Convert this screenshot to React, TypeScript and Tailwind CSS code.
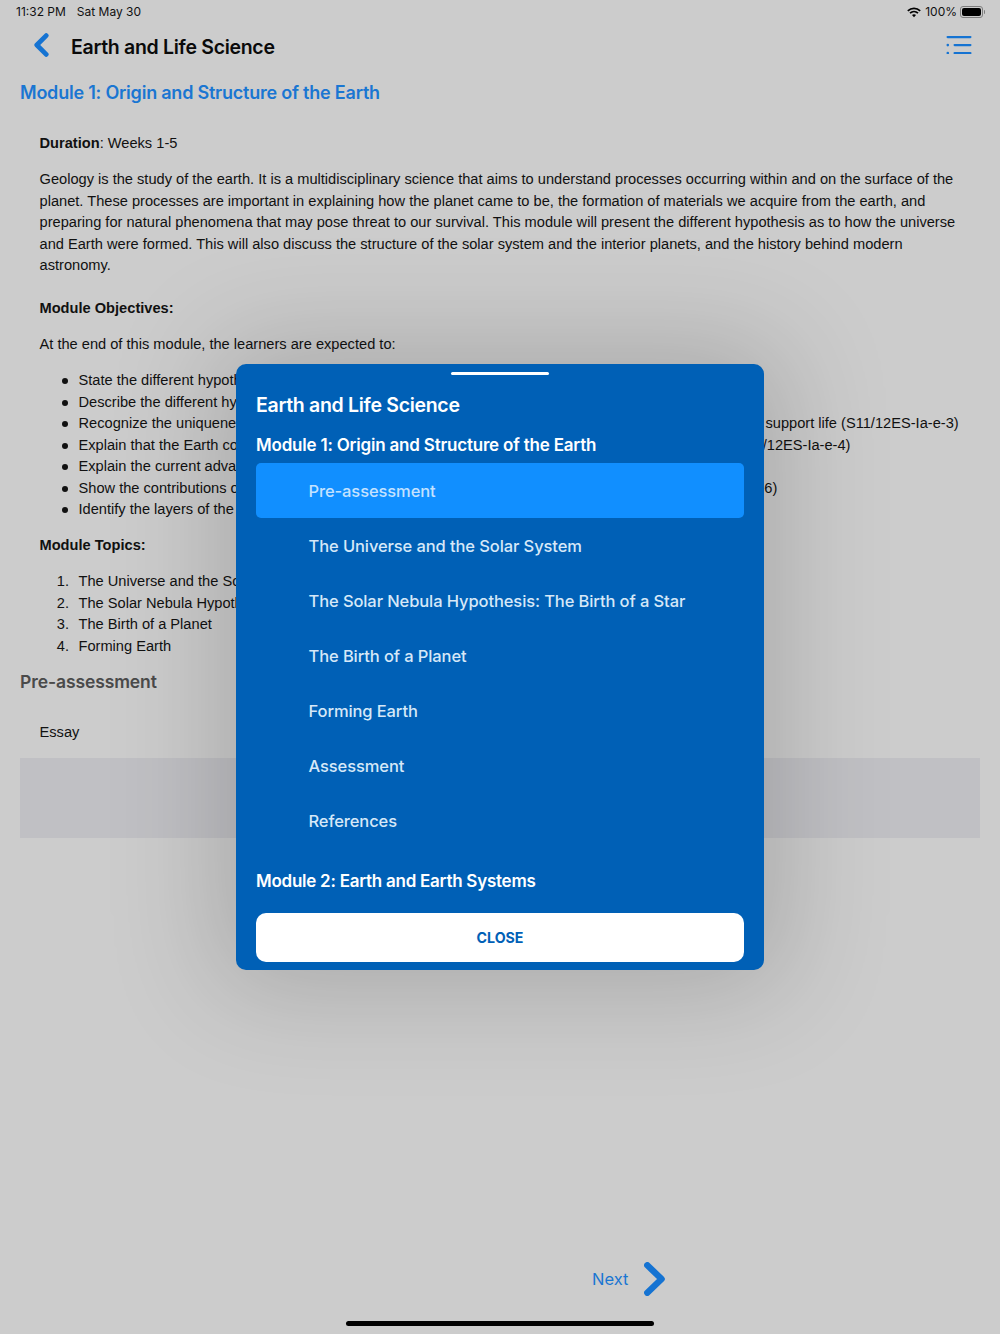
const objectives = [
  "State the different hypotheses explaining the origin of the universe",
  "Describe the different hypotheses explaining the origin of the solar system",
  "Recognize the uniqueness of Earth, being the only planet in the solar system with properties necessary to support life (S11/12ES-Ia-e-3)",
  "Explain that the Earth consists of four subsystems, across whose boundaries matter and energy flow (S11/12ES-Ia-e-4)",
  "Explain the current advancements on the solar system",
  "Show the contributions of personalities and events to our understanding of Earth systems (S11/12ES-Ia-e-6)",
  "Identify the layers of the Earth",
];
const topics = [
  "The Universe and the Solar System",
  "The Solar Nebula Hypothesis: The Birth of a Star",
  "The Birth of a Planet",
  "Forming Earth",
];
const sections = [
  "Pre-assessment",
  "The Universe and the Solar System",
  "The Solar Nebula Hypothesis: The Birth of a Star",
  "The Birth of a Planet",
  "Forming Earth",
  "Assessment",
  "References",
];

function BackChevron() {
  return (
    <svg viewBox="0 0 15 24" className="w-[15px] h-[24px] -mt-[2px]" fill="none">
      <path d="M12.2 2.6 L2.8 12 L12.2 21.4" stroke="#1573d2" strokeWidth="4.8" strokeLinecap="round" strokeLinejoin="round" />
    </svg>
  );
}

function NextChevron() {
  return (
    <svg viewBox="0 0 21 34" className="ml-[15.5px] w-[21px] h-[34px]" fill="none">
      <path d="M3.3 3.3 L17.6 17 L3.3 30.7" stroke="#1573d2" strokeWidth="6.4" strokeLinecap="round" strokeLinejoin="round" />
    </svg>
  );
}

function StatusBar() {
  return (
    <div className="flex h-[24px] items-center justify-between pl-[16px] pr-[15px] text-[12px] text-[#111] font-['Inter',sans-serif]">
      <div className="flex gap-[11px]">
        <span>11:32 PM</span>
        <span>Sat May 30</span>
      </div>
      <div className="flex items-center">
        <svg viewBox="0 0 14 11" className="w-[14px] h-[11px]" fill="none" stroke="#000" strokeWidth="1.7">
          <path d="M0.8 3.9 C4.4 0.5 9.6 0.5 13.2 3.9" />
          <path d="M3 6.1 C5.3 4 8.7 4 11 6.1" />
          <path d="M7 10.2 L5 8.1 C6.2 7.1 7.8 7.1 9 8.1 Z" fill="#000" stroke="none" />
        </svg>
        <span className="ml-[4px]">100%</span>
        <div className="ml-[3px] flex items-center">
          <div className="w-[23px] h-[12px] rounded-[3px] border border-[#7d7d7d] p-[1px]">
            <div className="w-full h-full rounded-[2px] bg-black" />
          </div>
          <div className="w-[1.5px] h-[4px] bg-[#7d7d7d] rounded-r-full ml-[0.5px]" />
        </div>
      </div>
    </div>
  );
}

function Header() {
  return (
    <div className="flex h-[44px] items-center pl-[34px] pr-[28px]">
      <BackChevron />
      <h1 className="ml-[22px] mt-[3px] text-[19.5px] tracking-[-0.3px] font-semibold text-[#0a0a0a] font-['Inter',sans-serif]">Earth and Life Science</h1>
      <svg viewBox="0 0 26 18" className="ml-auto -mt-[2px] w-[26px] h-[18px]" fill="#1573d2">
        <rect x="0.5" y="0" width="25" height="2.2" rx="1.1" />
        <rect x="7.5" y="8" width="18" height="2.2" rx="1.1" />
        <rect x="7.5" y="16" width="18" height="2.2" rx="1.1" />
        <circle cx="1.8" cy="9.1" r="1.3" />
        <circle cx="1.8" cy="17.1" r="1.3" />
      </svg>
    </div>
  );
}

function Content() {
  return (
    <main className="px-[20px]">
      <h2 className="mt-[12.5px] text-[18px] tracking-[-0.22px] leading-[24px] font-semibold text-[#1a76d2] font-['Inter',sans-serif] whitespace-nowrap">
        Module 1: Origin and Structure of the Earth
      </h2>
      <div className="px-[19.5px] mt-[28.75px] text-[14.63px] leading-[21.5px] text-[#111] font-['Liberation_Sans',sans-serif]">
        <p>
          <b>Duration</b>: Weeks 1-5
        </p>
        <p className="mt-[14.5px]">
          Geology is the study of the earth. It is a multidisciplinary science that aims to understand processes occurring within and on the surface of the planet. These processes are important in explaining how the planet came to be, the formation of materials we acquire from the earth, and preparing for natural phenomena that may pose threat to our survival. This module will present the different hypothesis as to how the universe and Earth were formed. This will also discuss the structure of the solar system and the interior planets, and the history behind modern astronomy.
        </p>
        <p className="mt-[21.5px] font-bold">Module Objectives:</p>
        <p className="mt-[14.5px]">At the end of this module, the learners are expected to:</p>
        <ul className="mt-[14.5px]">
          {objectives.map((o) => (
            <li key={o} className="flex whitespace-nowrap">
              <span className="flex w-[39px] shrink-0 items-center justify-end pr-[10.5px]">
                <span className="h-[6px] w-[6px] rounded-full bg-[#111]" />
              </span>
              <span>{o}</span>
            </li>
          ))}
        </ul>
        <p className="mt-[14.5px] font-bold">Module Topics:</p>
        <ol className="mt-[14.5px]">
          {topics.map((t, i) => (
            <li key={t} className="flex whitespace-nowrap">
              <span className="w-[39px] shrink-0 pr-[9.5px] text-right">{i + 1}.</span>
              <span>{t}</span>
            </li>
          ))}
        </ol>
      </div>
      <h3 className="mt-[12.75px] text-[17.5px] tracking-[-0.1px] leading-[24px] font-semibold text-[#4a4a4a] font-['Inter',sans-serif]">Pre-assessment</h3>
      <p className="mt-[28.25px] px-[19.5px] text-[14.63px] leading-[21.5px] text-[#111] font-['Liberation_Sans',sans-serif]">Essay</p>
      <div className="mt-[14.25px] h-[80px] bg-[#c0c0c4]" />
    </main>
  );
}

function Modal() {
  return (
    <section className="absolute left-[236px] top-[364px] w-[528px] h-[605.5px] rounded-[10px] bg-[#0060b6] px-[20px] pt-[8px] shadow-[0_0_110px_20px_rgba(0,0,0,0.17)] text-white font-['Inter',sans-serif]">
      <div className="mx-auto w-[98px] h-[3px] rounded-full bg-white" />
      <h2 className="mt-[16px] text-[19.5px] tracking-[-0.3px] leading-[28px] font-semibold">Earth and Life Science</h2>
      <h3 className="mt-[14px] text-[17px] tracking-[-0.2px] leading-[24px] font-semibold whitespace-nowrap">Module 1: Origin and Structure of the Earth</h3>
      <ul className="mt-[6px]">
        {sections.map((s, i) => (
          <li
            key={s}
            className={
              i === 0
                ? "flex h-[55.1px] items-center rounded-[5px] bg-[#118fff] pl-[52.5px] pt-[1px] text-[16.5px] tracking-[-0.1px] font-medium text-[#c4e2ff]"
                : "flex h-[55.1px] items-center pl-[52.5px] pt-[1px] text-[16.5px] tracking-[-0.1px] font-medium text-[#d6e8f8]"
            }
          >
            {s}
          </li>
        ))}
      </ul>
      <h3 className="mt-[20.5px] text-[17px] tracking-[-0.25px] leading-[24px] font-semibold">Module 2: Earth and Earth Systems</h3>
      <button className="mt-[19.5px] block w-full h-[49px] rounded-[10px] bg-white text-[14.2px] font-bold text-[#0060b6]">CLOSE</button>
    </section>
  );
}

export default function App() {
  return (
    <div className="relative h-[1334px] w-[1000px] overflow-hidden bg-[#cccccc]">
      <StatusBar />
      <Header />
      <Content />
      <Modal />
      <div className="absolute left-[592px] top-[1262px] flex h-[34px] items-center">
        <span className="mt-[1.5px] text-[16.5px] text-[#1a76d2] font-['Inter',sans-serif]">Next</span>
        <NextChevron />
      </div>
      <div className="absolute left-[346px] top-[1321px] w-[308px] h-[5px] rounded-full bg-black" />
    </div>
  );
}
